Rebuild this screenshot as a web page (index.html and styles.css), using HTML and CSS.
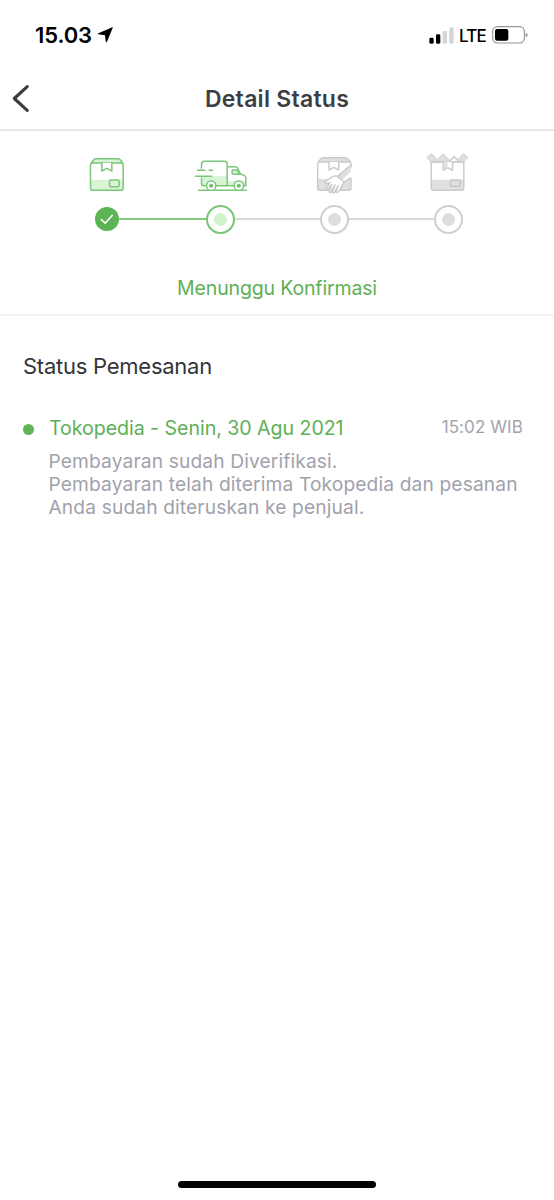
FILE: index.html
```html
<!DOCTYPE html>
<html lang="id">
<head>
<meta charset="utf-8">
<meta name="viewport" content="width=device-width">
<title>Detail Status</title>
<link rel="stylesheet" href="styles.css">
</head>
<body>
<div class="screen">
  <div class="statusbar">
    <div class="clock"><span class="time">15.03</span>
      <svg class="location" viewBox="0 0 46 46"><path d="M44 1Q46 0 45 3L29 42Q27 46 25 42L23 24L4 21Q0 20 4 18Z"/></svg>
    </div>
    <div class="indicators">
      <svg class="signal" viewBox="0 0 75 51"><rect x="1" y="32" width="13" height="18" rx="4"/><rect x="21" y="22" width="13" height="28" rx="4"/><g fill="#d5d5d5"><rect x="41" y="12" width="13" height="38" rx="4"/><rect x="61" y="1" width="13" height="49" rx="4"/></g></svg>
      <span class="network">LTE</span>
      <svg class="battery" viewBox="0 0 108 54"><rect x="2" y="2" width="95" height="49" rx="14" fill="none" stroke="#969696" stroke-width="3.5"/><rect x="9" y="9" width="40" height="35" rx="6"/><path d="M101 20Q107 22 107 27T101 34Z" fill="#969696"/></svg>
    </div>
  </div>
  <header class="header">
    <svg class="back" viewBox="0 0 18 28"><path d="M15.5 2.5 3 14 15.5 25.5"/></svg>
    <h1 class="title">Detail Status</h1>
  </header>
  <section class="progress">
    <div class="steps">
      <div class="step">
        <svg class="icon green" viewBox="-90.5 15 342 135">
          <path class="tint" d="M32 104H128V131Q128 136 122 136H38Q32 136 32 130Z"/>
          <path class="tint" d="M33 54 44 42H116L127 54Z"/>
          <path d="M31 62Q31 56 35 51L41 44Q43 41 47 41H113Q117 41 120 44L126 51Q129 55 129 61V129Q129 136 122 136H38Q31 136 31 129ZM34 54H126"/>
          <path class="paper" d="M65 54V78L80 70 95 78V54"/>
          <rect class="tint label" x="88" y="105" width="29" height="20" rx="4"/>
        </svg>
        <div class="track"><i class="line"></i><span class="node done"><svg viewBox="0 0 24 24"><path d="M6.3 12.5 10.2 16.2 17.3 8.3"/></svg></span><i class="line on"></i></div>
      </div>
      <div class="step">
        <svg class="icon green" viewBox="-48.5 15 342 135">
          <path class="tint" d="M65 94H141V123H65ZM141 108H196V123H141Z"/>
          <path d="M64 70V58Q64 49 73 49H132Q141 49 141 58V122H107M79 122H70Q64 122 64 115V100M141 65H165Q170 65 173 70L181 87 192 91Q197 93 197 99V122H190M162 122H141"/>
          <path class="tint label" d="M156 75H170L177 88H160Q156 88 156 84Z"/>
          <path d="M52 76H74M87 76H97M46 94H95M55 136H198"/>
          <circle class="paper" cx="93" cy="122" r="14"/><circle class="paper" cx="176" cy="122" r="14"/>
          <g class="hub"><circle cx="93" cy="122" r="6"/><circle cx="176" cy="122" r="6"/></g>
        </svg>
        <div class="track"><i class="line on"></i><span class="node active"></span><i class="line off"></i></div>
      </div>
      <div class="step">
        <svg class="icon gray" viewBox="-35 15 342 135">
          <path class="tint" d="M85 102H182V136H85ZM87 51 97 39H171L181 51Z"/>
          <path d="M110 136H92Q84 136 84 128V58Q84 53 87 49L94 41Q97 38 101 38H167Q171 38 174 41L180 48Q184 53 184 58V67M87 51H181M184 101V128Q184 136 176 136H154"/>
          <path class="paper" d="M118 51V75L132 67 147 75V51"/>
          <path class="paper" stroke="none" d="M184 66 143 94 164 111 185 97Z"/>
          <path class="tint" d="M183 62 144 94 157 105 183 81Z"/>
          <path class="paper" d="M164 111 143 94Q131 91 125 97L108 109Q104 113 111 116L121 113 110 133Q111 138 116 134L126 119 118 140Q121 145 125 139L136 120 128 142Q132 147 136 140L145 123 139 139Q143 145 149 137L158 120Z"/>
          <path d="M144 94 183 60M164 111 183 99"/>
        </svg>
        <div class="track"><i class="line off"></i><span class="node"></span><i class="line off"></i></div>
      </div>
      <div class="step">
        <svg class="icon gray" viewBox="-23.5 15 342 135">
          <path class="tint" d="M94 104H192V136H94Z"/>
          <path class="tint flap" d="M82 37 95 26 109 42 97 53ZM203 37 191 26 176 42 188 53ZM105 51 130 27 155 51Z"/>
          <path class="paper" d="M147 51 163 35 180 51Z"/>
          <path d="M94 51H192V128Q192 136 184 136H102Q94 136 94 128Z"/>
          <path class="paper" d="M130 51V76L144 68 158 76V51"/>
          <path class="tint" d="M131 52H143V68L131 75Z"/>
          <rect class="tint label" x="152" y="105" width="29" height="19" rx="3"/>
        </svg>
        <div class="track"><i class="line off"></i><span class="node"></span><i class="line"></i></div>
      </div>
    </div>
    <p class="current">Menunggu Konfirmasi</p>
  </section>
  <section class="history">
    <h2 class="heading">Status Pemesanan</h2>
    <article class="event">
      <i class="dot"></i>
      <div class="body">
        <div class="row"><h3 class="who">Tokopedia - Senin, 30 Agu 2021</h3><time class="when">15:02 WIB</time></div>
        <p class="message">Pembayaran sudah Diverifikasi.<br>Pembayaran telah diterima Tokopedia dan pesanan<br>Anda sudah diteruskan ke penjual.</p>
      </div>
    </article>
  </section>
  <div class="home"></div>
</div>
</body>
</html>
```
FILE: styles.css
```css
* { box-sizing: border-box; margin: 0; padding: 0; }
body { background: #fff; font-family: Inter, "Liberation Sans", sans-serif; font-weight: 400; }
.screen { width: 554px; height: 1200px; display: flex; flex-direction: column; overflow: hidden; }
.statusbar { height: 70px; padding: 0 26px 0 35px; display: flex; justify-content: space-between; }
.clock { display: flex; align-items: flex-start; padding-top: 21px; gap: 5px; }
.time { font-size: 22px; line-height: 29px; font-weight: 600; letter-spacing: -0.1px; }
.location { width: 16px; height: 16px; margin-top: 6px; }
.indicators { display: flex; align-items: flex-start; padding-top: 26px; }
.signal { width: 25px; height: 17px; margin-top: 1px; }
.network { font-size: 17px; line-height: 20px; font-weight: 500; margin: 0 6px 0 5px; letter-spacing: -0.8px; }
.battery { width: 36px; height: 18px; }
.header { height: 61px; border-bottom: 2px solid #e8e8e8; display: grid; grid-template-columns: 40px 1fr 40px; align-items: center; }
.back { width: 19px; height: 29px; margin-left: 11px; margin-top: -3px; fill: none; stroke: #3b3c40; stroke-width: 3; stroke-linecap: round; stroke-linejoin: round; }
.title { text-align: center; color: #3d3e43; font-size: 23px; line-height: 28px; font-weight: 600; letter-spacing: 0.27px; margin-top: -1px; }
.progress { height: 185px; padding-top: 19px; border-bottom: 2px solid #f3f3f3; }
.steps { display: grid; grid-template-columns: repeat(4, 114px); margin-left: 49.5px; }
.step { display: flex; flex-direction: column; }
.icon { width: 114px; height: 45px; fill: none; stroke-width: 4.5; stroke-linecap: round; stroke-linejoin: round; }
.green { stroke: #7bc67a; }
.gray { stroke: #cbcbcb; }
.green .tint { fill: #d8f4d5; }
.gray .tint { fill: #dfdfdf; }
.tint { stroke: none; }
.flap { stroke: #cbcbcb; stroke-width: 3; }
.green .label { stroke: #7bc67a; }
.gray .label { stroke: #c6c6c6; }
.paper { fill: #fff; }
.hub { fill: #6dbe69; stroke: none; }
.track { height: 30px; margin-top: 9px; display: flex; align-items: center; justify-content: center; }
.line { flex: 1; height: 2px; }
.on { background: #86cc82; }
.off { background: #dadada; }
.node { flex: none; width: 29px; height: 29px; border-radius: 50%; border: 2px solid #cfcfcf; display: flex; align-items: center; justify-content: center; }
.node:not(.done)::before { content: ""; width: 13px; height: 13px; border-radius: 50%; background: #dedede; }
.node.active { border-color: #78c574; }
.node.active::before { background: #d0f2cd; }
.node.done { width: 24px; height: 24px; border: 0; background: #5db454; }
.done svg { width: 24px; height: 24px; fill: none; stroke: #fff; stroke-width: 1.6; stroke-linecap: round; stroke-linejoin: round; }
.current { margin-top: 40px; text-align: center; color: #5eaf55; font-size: 19.5px; line-height: 28px; letter-spacing: -0.15px; }
.history { flex: 1; padding: 36px 31px 0 23px; }
.heading { color: #34353b; font-size: 22px; line-height: 28px; font-weight: 400; letter-spacing: -0.25px; }
.event { display: flex; margin-top: 34px; }
.dot { width: 11px; height: 11px; border-radius: 50%; background: #5fb457; margin: 10px 15px 0 0; flex: none; }
.body { flex: 1; }
.row { display: flex; justify-content: space-between; }
.who { color: #5eaf55; font-size: 19.6px; line-height: 29px; font-weight: 400; letter-spacing: -0.05px; }
.when { color: #a2a4ae; font-size: 17px; line-height: 26px; letter-spacing: 0.1px; }
.message { color: #a0a2ac; font-size: 19.2px; line-height: 23px; margin-top: 7px; margin-left: -0.5px; white-space: nowrap; letter-spacing: 0.13px; }
.home { width: 198px; height: 7px; border-radius: 4px; background: #000; margin: 0 auto 12px; }
```
